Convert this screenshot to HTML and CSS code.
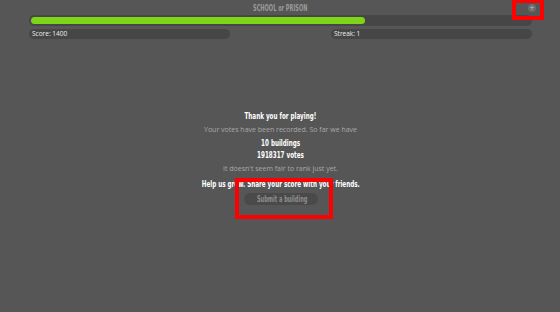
FILE: index.html
```html
<!DOCTYPE html>
<html>
<head>
<meta charset="utf-8">
<link rel="stylesheet" href="styles.css">
</head>
<body>
<div class="page">
  <header class="top">
    <div class="title"><span class="cond">SCHOOL or PRISON</span></div>
    <button class="plus">+</button>
  </header>
  <div class="bars">
    <div class="track"><div class="fill" style="width:67%"></div></div>
    <div class="stats">
      <div class="pill">Score: 1400</div>
      <div class="pill">Streak: 1</div>
    </div>
  </div>
  <main class="end">
    <h2 class="strong l-thank"><span class="cond">Thank you for playing!</span></h2>
    <p class="muted l-votes">Your votes have been recorded. So far we have</p>
    <p class="strong l-count"><span class="cond">10 buildings</span></p>
    <p class="strong l-count"><span class="cond">1918317 votes</span></p>
    <p class="muted l-fair">It doesn't seem fair to rank just yet.</p>
    <p class="strong l-help"><span class="cond">Help us grow. Share your score with your friends.</span></p>
    <button class="submit"><span class="cond">Submit a building</span></button>
  </main>
</div>
<div class="mark mark-plus"></div>
<div class="mark mark-submit"></div>
</body>
</html>
```
FILE: styles.css
```css
html, body {
  margin: 0;
  padding: 0;
  background: #565656;
  width: 560px;
  height: 312px;
  overflow: hidden;
}
.page {
  display: flex;
  flex-direction: column;
  padding: 0 28px 0 29px;
}
.cond {
  display: inline-block;
  white-space: nowrap;
  transform: scaleX(0.66);
  transform-origin: center;
}
.top {
  position: relative;
  height: 15px;
  display: flex;
  justify-content: center;
  align-items: center;
}
.title {
  font-family: "DejaVu Sans Condensed", "DejaVu Sans", sans-serif;
  font-weight: bold;
  font-size: 8.5px;
  color: #9a9a9a;
}
.plus {
  position: absolute;
  right: -4px;
  top: 4px;
  width: 8px;
  height: 8px;
  border-radius: 50%;
  border: none;
  padding: 0;
  background: #6c6c6c;
  color: #bdbdbd;
  font-family: "DejaVu Sans", sans-serif;
  font-size: 7px;
  line-height: 8px;
  text-align: center;
}
.bars {
  display: flex;
  flex-direction: column;
  gap: 3px;
}
.track {
  height: 7px;
  padding: 2px;
  border-radius: 6px;
  background: #464646;
}
.fill {
  height: 100%;
  border-radius: 4px;
  background: #7ed418;
}
.stats {
  display: flex;
  justify-content: space-between;
}
.pill {
  width: 195px;
  height: 10px;
  padding: 0 3px;
  border-radius: 5px;
  background: #464646;
  color: #eeeeee;
  font-family: "Open Sans", sans-serif;
  font-size: 6.5px;
  line-height: 10px;
}
.end {
  margin-top: 70px;
  display: flex;
  flex-direction: column;
  align-items: center;
  text-align: center;
}
.end h2, .end p { margin: 0; }
.strong {
  font-family: "DejaVu Sans Condensed", "DejaVu Sans", sans-serif;
  font-weight: bold;
  color: #ffffff;
  font-size: 9.5px;
}
.l-thank { height: 14px; line-height: 14px; }
.l-votes { height: 14px; line-height: 14px; }
.l-count { height: 12px; line-height: 12px; }
.l-fair { height: 16px; line-height: 16px; }
.l-help { height: 14px; line-height: 14px; }
.muted {
  font-family: "Open Sans", sans-serif;
  font-size: 7px;
  color: #a8a8a8;
}
.submit {
  margin-top: 2px;
  width: 74px;
  height: 12px;
  border: none;
  border-radius: 6px;
  background: #4a4a4a;
  color: #8e8e8e;
  font-family: "DejaVu Sans Condensed", "DejaVu Sans", sans-serif;
  font-weight: bold;
  font-size: 8.5px;
  padding: 0;
  line-height: 12px;
}
.mark {
  position: absolute;
  border: 4px solid #ff0000;
  box-sizing: border-box;
}
.mark-plus {
  left: 512px;
  top: -1px;
  width: 32px;
  height: 21px;
}
.mark-submit {
  left: 235px;
  top: 178px;
  width: 98px;
  height: 41px;
}
```
